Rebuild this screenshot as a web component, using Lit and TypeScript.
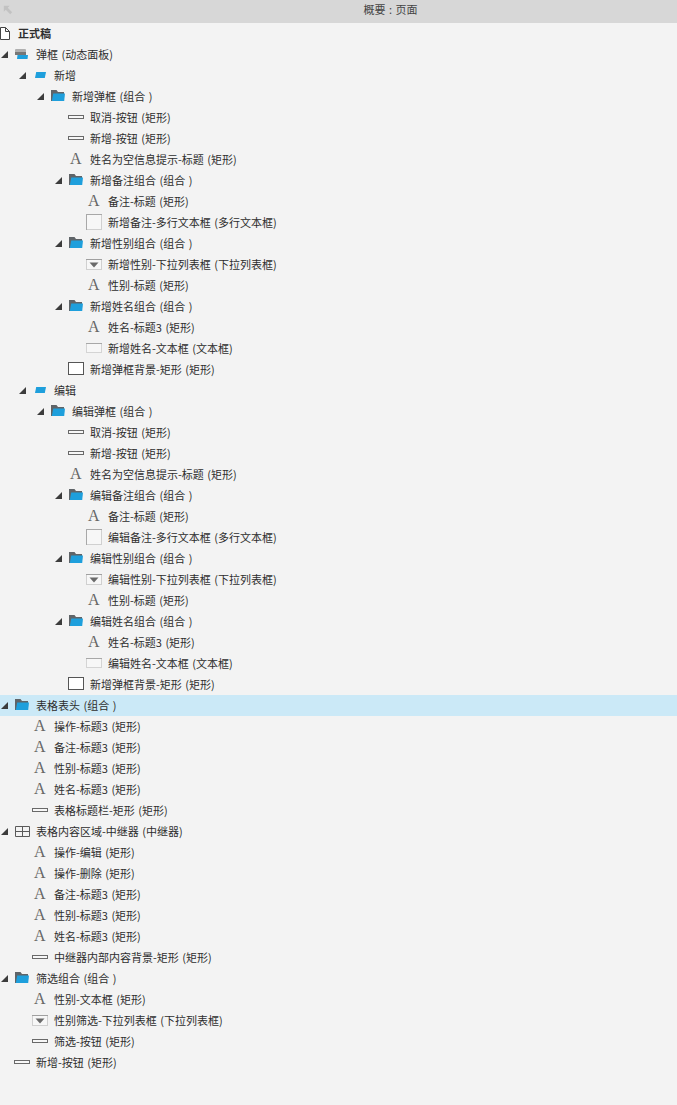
import { LitElement, html, css, svg } from "lit";
import { customElement } from "lit/decorators.js";

type Row = [number, string, string, boolean?];
// depth, icon, label, hasArrow
const rows: Row[] = [
  [0, "fold", "弹框 (动态面板)", true],
  [1, "state", "新增", true],
  [2, "folder", "新增弹框 (组合 )", true],
  [3, "btn", "取消-按钮 (矩形)"],
  [3, "btn", "新增-按钮 (矩形)"],
  [3, "a", "姓名为空信息提示-标题 (矩形)"],
  [3, "folder", "新增备注组合 (组合 )", true],
  [4, "a", "备注-标题 (矩形)"],
  [4, "area", "新增备注-多行文本框 (多行文本框)"],
  [3, "folder", "新增性别组合 (组合 )", true],
  [4, "select", "新增性别-下拉列表框 (下拉列表框)"],
  [4, "a", "性别-标题 (矩形)"],
  [3, "folder", "新增姓名组合 (组合 )", true],
  [4, "a", "姓名-标题3 (矩形)"],
  [4, "input", "新增姓名-文本框 (文本框)"],
  [3, "rect", "新增弹框背景-矩形 (矩形)"],
  [1, "state", "编辑", true],
  [2, "folder", "编辑弹框 (组合 )", true],
  [3, "btn", "取消-按钮 (矩形)"],
  [3, "btn", "新增-按钮 (矩形)"],
  [3, "a", "姓名为空信息提示-标题 (矩形)"],
  [3, "folder", "编辑备注组合 (组合 )", true],
  [4, "a", "备注-标题 (矩形)"],
  [4, "area", "编辑备注-多行文本框 (多行文本框)"],
  [3, "folder", "编辑性别组合 (组合 )", true],
  [4, "select", "编辑性别-下拉列表框 (下拉列表框)"],
  [4, "a", "性别-标题 (矩形)"],
  [3, "folder", "编辑姓名组合 (组合 )", true],
  [4, "a", "姓名-标题3 (矩形)"],
  [4, "input", "编辑姓名-文本框 (文本框)"],
  [3, "rect", "新增弹框背景-矩形 (矩形)"],
  [0, "folder", "表格表头 (组合 )", true],
  [1, "a", "操作-标题3 (矩形)"],
  [1, "a", "备注-标题3 (矩形)"],
  [1, "a", "性别-标题3 (矩形)"],
  [1, "a", "姓名-标题3 (矩形)"],
  [1, "btn", "表格标题栏-矩形 (矩形)"],
  [0, "grid", "表格内容区域-中继器 (中继器)", true],
  [1, "a", "操作-编辑 (矩形)"],
  [1, "a", "操作-删除 (矩形)"],
  [1, "a", "备注-标题3 (矩形)"],
  [1, "a", "性别-标题3 (矩形)"],
  [1, "a", "姓名-标题3 (矩形)"],
  [1, "btn", "中继器内部内容背景-矩形 (矩形)"],
  [0, "folder", "筛选组合 (组合 )", true],
  [1, "a", "性别-文本框 (矩形)"],
  [1, "select", "性别筛选-下拉列表框 (下拉列表框)"],
  [1, "btn", "筛选-按钮 (矩形)"],
  [0, "btn", "新增-按钮 (矩形)"],
];

const ico = (body: unknown) =>
  html`<svg width="18" height="21" viewBox="0 0 18 21">${body}</svg>`;

const icons: Record<string, unknown> = {
  fold: ico(svg`<rect x="1" y="5" width="11" height="3.5" rx="1" fill="#b0b0b0"/><rect x="1" y="8" width="11" height="3" fill="#777"/><path d="M3.5 11H14L13.5 15H3Z" fill="#1e9fdc"/>`),
  state: ico(svg`<path d="M4.2 7H14L12.8 13H3Z" fill="#1e9fdc"/>`),
  folder: ico(svg`<path d="M1 4H6.5L8 6H14V8H4.5L3 15H1Z" fill="#5f6468"/><path d="M3.2 7.5H15L14.2 15H1.8Z" fill="#1e9fdc"/>`),
  btn: ico(svg`<rect x="0.5" y="8.5" width="15" height="3" fill="#f7f7f7" stroke="#696969"/>`),
  rect: ico(svg`<rect x="0.5" y="3.5" width="15" height="12" fill="#fff" stroke="#555"/>`),
  area: ico(svg`<rect x="0.5" y="2.5" width="15" height="15" fill="#f7f7f7" stroke="#d0d0d0"/><path d="M0 2.5H16M0.5 2V18" stroke="#a8a8a8"/>`),
  select: ico(svg`<rect x="0.5" y="5.5" width="15" height="10" fill="#f7f7f7" stroke="#d0d0d0"/><path d="M0 5.5H16" stroke="#a0a0a0"/><path d="M3.5 8.5H12.5L8 13.5Z" fill="#6a6a6a"/>`),
  input: ico(svg`<rect x="0.5" y="5.5" width="15" height="9" fill="#f7f7f7" stroke="#d4d4d4"/><path d="M0 5.5H16" stroke="#a8a8a8"/>`),
  grid: ico(svg`<path d="M1.5 5.5H15.5V15.5H1.5ZM1.5 10.5H15.5M8.5 5.5V15.5" fill="none" stroke="#5a5a5a"/>`),
};

@customElement("app-root")
export class AppRoot extends LitElement {
  static styles = css`
    :host {
      display: block;
      width: 677px;
      height: 1105px;
      background: #f3f3f3;
      overflow: hidden;
      font-family: "Noto Sans CJK SC", "Liberation Sans", sans-serif;
      font-size: 11px;
      word-spacing: 1px;
      color: #2e2e2e;
    }
    .head {
      height: 23px;
      background: #d7d7d7;
      display: flex;
      align-items: center;
      justify-content: center;
      position: relative;
      color: #444;
      padding: 0 0 6px 104px;
      box-sizing: border-box;
    }
    .back {
      position: absolute;
      left: 3px;
      top: 5px;
    }
    .page {
      height: 21px;
      display: flex;
      align-items: center;
      font-weight: 700;
      gap: 8px;
    }
    .page svg {
      display: block;
    }
    .row {
      height: 21px;
      display: flex;
      align-items: center;
      white-space: nowrap;
    }
    .sel {
      background: #cbe9f7;
    }
    .arrow {
      width: 14px;
      height: 21px;
      flex: none;
      display: flex;
      align-items: center;
      padding-left: 1px;
      box-sizing: border-box;
    }
    .arrow svg {
      display: block;
    }
    .icon {
      width: 18px;
      height: 21px;
      flex: none;
      margin-right: 4px;
    }
    .icon svg {
      display: block;
    }
    .label {
      padding-bottom: 2px;
    }
    .a {
      display: block;
      font-family: "Liberation Serif", serif;
      font-size: 16px;
      color: #666;
      line-height: 20px;
      padding-left: 2px;
    }
  `;

  private rowTpl(r: Row) {
    const [d, ic, label, arrow] = r;
    const sel = label === "表格表头 (组合 )";
    return html`<div class="row ${sel ? "sel" : ""}" style="padding-left:${d * 18}px">
      <span class="arrow">${arrow
        ? html`<svg width="7" height="7" viewBox="0 0 7 7"><path d="M0 7H7V0Z" fill="#3c3c3c"/></svg>`
        : ""}</span>
      <span class="icon">${ic === "a" ? html`<span class="a">A</span>` : icons[ic]}</span>
      <span class="label">${label}</span>
    </div>`;
  }

  render() {
    return html`
      <div class="head">
        <svg class="back" width="10" height="10" viewBox="0 0 12 12"><path d="M1 1H8L5.7 3.3L11 8.6L8.6 11L3.3 5.7L1 8Z" fill="#c2c2c2"/></svg>
        概要 : 页面
      </div>
      <div class="page">
        <svg width="10" height="13" viewBox="0 0 10 13"><path d="M0.5 0.5H5.5L9.5 4.5V12.5H0.5ZM5.5 0.5V4.5H9.5" fill="#fff" stroke="#444"/></svg>
        <span class="label">正式稿</span>
      </div>
      ${rows.map((r) => this.rowTpl(r))}
    `;
  }
}
